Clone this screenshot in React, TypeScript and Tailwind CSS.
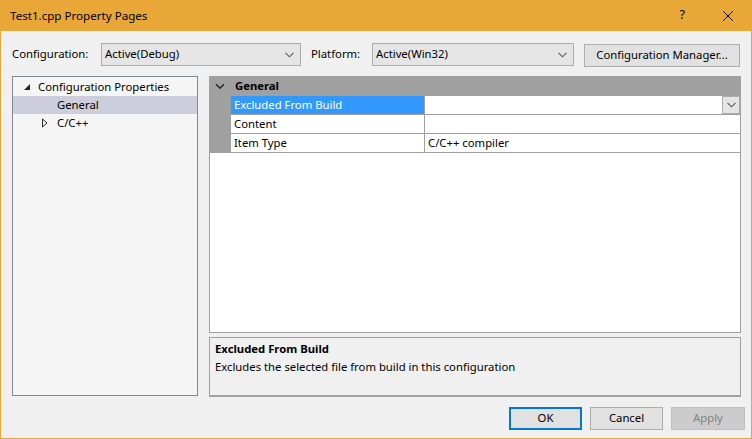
import React from "react";

const font = { fontFamily: '"Noto Sans", "Liberation Sans", sans-serif' };

function Chevron({ className = "" }: { className?: string }) {
  return (
    <svg width="9" height="6" viewBox="0 0 9 6" className={className}>
      <path d="M0.5 0.8 L4.5 4.8 L8.5 0.8" fill="none" stroke="#5a5a5a" strokeWidth="1.1" />
    </svg>
  );
}

function Combo({ text, w }: { text: string; w: string }) {
  return (
    <div className={`${w} h-[23px] bg-[#e5e5e5] border border-[#acacac] flex items-center justify-between pl-[3px] pr-[6px]`}>
      <span>{text}</span>
      <Chevron />
    </div>
  );
}

function Row({ name, value, selected }: { name: string; value?: string; selected?: boolean }) {
  return (
    <div className="flex h-[19px]">
      <div className="w-[21px] bg-[#a0a0a0] shrink-0" />
      <div className={`w-[194px] shrink-0 border-b border-r border-[#a0a0a0] pl-[3px] flex items-center leading-none ${selected ? "bg-[#3399ff] text-white" : "bg-white"}`}>
        {name}
      </div>
      <div className="flex-1 border-b border-[#a0a0a0] bg-white flex items-center pl-[3px] leading-none relative">
        {value}
        {selected && (
          <div className="absolute right-0 top-0 w-[18px] h-[18px] bg-[#e5e5e5] border border-[#acacac] flex items-center justify-center">
            <Chevron />
          </div>
        )}
      </div>
    </div>
  );
}

export default function App() {
  return (
    <div className="w-[752px] h-[439px] bg-[#f0f0f0] border border-t-0 border-[#e8a736] flex flex-col text-[11.3px] text-black overflow-hidden" style={font}>
      {/* title bar */}
      <div className="h-[31px] bg-[#e8a736] flex items-center shrink-0 -mx-px px-[10px]">
        <span className="text-[11.6px]">Test1.cpp Property Pages</span>
        <div className="flex-1" />
        <span className="text-[12.5px] mr-[37px]">?</span>
        <svg width="12" height="12" viewBox="0 0 12 12" className="mr-[8px]">
          <path d="M1 1 L11 11 M11 1 L1 11" stroke="#000" strokeWidth="1" />
        </svg>
      </div>

      {/* config row */}
      <div className="flex items-center mt-[12px] pl-[11px] h-[23px]">
        <span className="w-[89px]">Configuration:</span>
        <Combo text="Active(Debug)" w="w-[200px]" />
        <span className="ml-[10px] w-[61px]">Platform:</span>
        <Combo text="Active(Win32)" w="w-[202px]" />
        <div className="ml-[10px] mt-[2px] w-[156px] h-[23px] bg-[#e1e1e1] border border-[#adadad] flex items-center justify-center">
          Configuration Manager...
        </div>
      </div>

      {/* panels */}
      <div className="flex mt-[10px] pl-[11px] h-[321px]">
        <div className="w-[186px] h-[320px] bg-[#f5f5f5] border border-[#828790] py-px">
          <div className="h-[18px] flex items-center">
            <svg width="8" height="8" viewBox="0 0 8 8" className="ml-[10px]">
              <path d="M7 1 L7 7 L1 7 Z" fill="#262626" />
            </svg>
            <span className="ml-[7px]">Configuration Properties</span>
          </div>
          <div className="h-[18px] flex items-center bg-[#cccedb] pl-[44px]">General</div>
          <div className="h-[18px] flex items-center">
            <svg width="8" height="10" viewBox="0 0 8 10" className="ml-[28px]">
              <path d="M1.5 1 L6 5 L1.5 9 Z" fill="none" stroke="#262626" strokeWidth="1" />
            </svg>
            <span className="ml-[8px]">C/C++</span>
          </div>
        </div>

        <div className="ml-[11px] w-[532px] flex flex-col">
          <div className="h-[258px] bg-white border border-t-0 border-[#a0a0a0] flex flex-col">
            <div className="h-[20px] bg-[#a0a0a0] flex items-center shrink-0">
              <svg width="10" height="7" viewBox="0 0 10 7" className="ml-[5px]">
                <path d="M1 1.2 L5 5.2 L9 1.2" fill="none" stroke="#2a2a2a" strokeWidth="1.6" />
              </svg>
              <span className="ml-[10px] font-bold">General</span>
            </div>
            <Row name="Excluded From Build" selected />
            <Row name="Content" />
            <Row name="Item Type" value="C/C++ compiler" />
          </div>
          <div className="mt-[4px] h-[60px] border border-b-2 border-[#a0a0a0] bg-[#f0f0f0] px-[5px] pt-[2px] leading-[18px]">
            <div className="font-bold">Excluded From Build</div>
            <div>Excludes the selected file from build in this configuration</div>
          </div>
        </div>
      </div>

      {/* buttons */}
      <div className="flex mt-[10px] pl-[508px] gap-[8px]">
        <div className="w-[73px] h-[23px] bg-[#e1e1e1] border-2 border-[#0078d7] flex items-center justify-center">OK</div>
        <div className="w-[73px] h-[23px] bg-[#e1e1e1] border border-[#adadad] flex items-center justify-center">Cancel</div>
        <div className="w-[74px] h-[23px] bg-[#cccccc] border border-[#bfbfbf] text-[#838383] flex items-center justify-center">Apply</div>
      </div>
    </div>
  );
}
